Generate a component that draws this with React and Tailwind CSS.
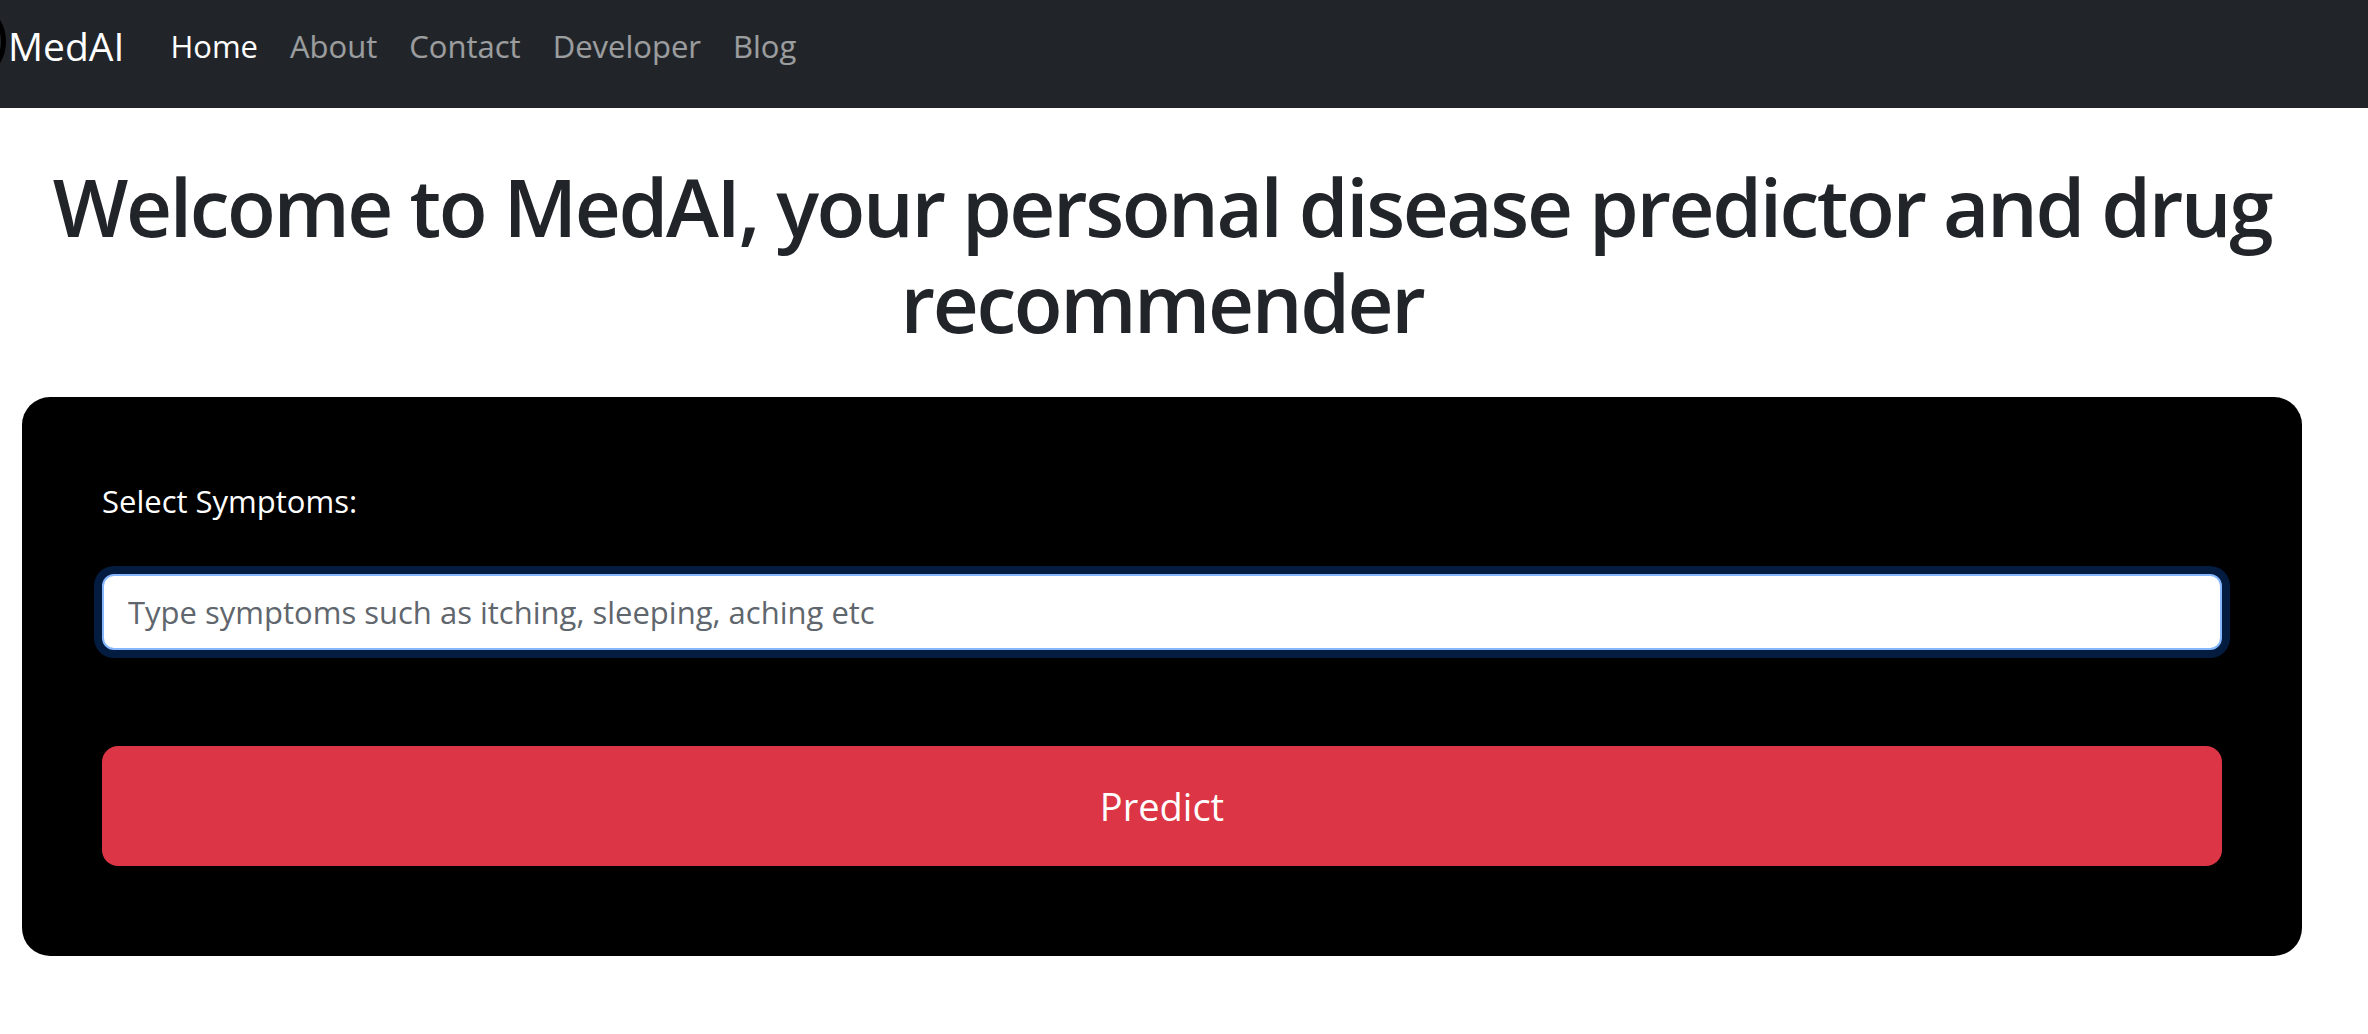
import { useState } from "react";

const navLinks = ["Home", "About", "Contact", "Developer", "Blog"];

function Navbar() {
  return (
    <nav className="h-[108px] pb-[16px] bg-[#212529] flex items-center overflow-hidden">
      {/* logo (mostly cut off on the left) */}
      <div className="self-start shrink-0 w-[83px] h-[83px] -ml-[77px] rounded-full border-[5px] border-black" />
      <a href="#" className="ml-[2px] text-[39px] leading-[60px] text-white">
        MedAI
      </a>
      <ul className="flex ml-[30px]">
        {navLinks.map((link, i) => (
          <li key={link}>
            <a
              href="#"
              className={
                i === 0
                  ? "block px-[16px] text-[31px] leading-[48px] text-white"
                  : "block px-[16px] text-[31px] leading-[48px] text-white/55"
              }
            >
              {link}
            </a>
          </li>
        ))}
      </ul>
    </nav>
  );
}

export default function App() {
  const [symptoms, setSymptoms] = useState("");

  const handleSubmit = (e) => {
    e.preventDefault();
  };

  return (
    <div className="min-h-screen bg-white font-['Open_Sans',sans-serif]">
      <Navbar />

      <div className="w-[2324px]">
        {/* Title */}
        <h1 className="mt-[50px] mb-[47px] text-center text-[80px] leading-[96px] font-semibold tracking-[-0.03em] text-[#212529]">
          Welcome to MedAI, your personal disease predictor and drug
          recommender
        </h1>

        {/* Form */}
        <form
          onSubmit={handleSubmit}
          className="mx-[22px] rounded-[28px] bg-black px-[80px] pt-[80px] pb-[90px]"
        >
          <label className="block text-[31px] leading-[48px] text-white">
            Select Symptoms:
          </label>
          <input
            type="text"
            autoFocus
            value={symptoms}
            onChange={(e) => setSymptoms(e.target.value)}
            placeholder="Type symptoms such as itching, sleeping, aching etc"
            className="mt-[49px] block w-full h-[76px] rounded-[12px] border-2 border-[#86b7fe] bg-white px-[24px] text-[31px] text-[#212529] placeholder:text-[#5f666d] outline-none shadow-[0_0_0_8px_rgba(13,110,253,0.25)]"
          />
          <button
            type="submit"
            className="mt-[96px] block w-full h-[120px] rounded-[16px] bg-[#dc3545] text-[38px] text-white"
          >
            Predict
          </button>
        </form>
      </div>
    </div>
  );
}
